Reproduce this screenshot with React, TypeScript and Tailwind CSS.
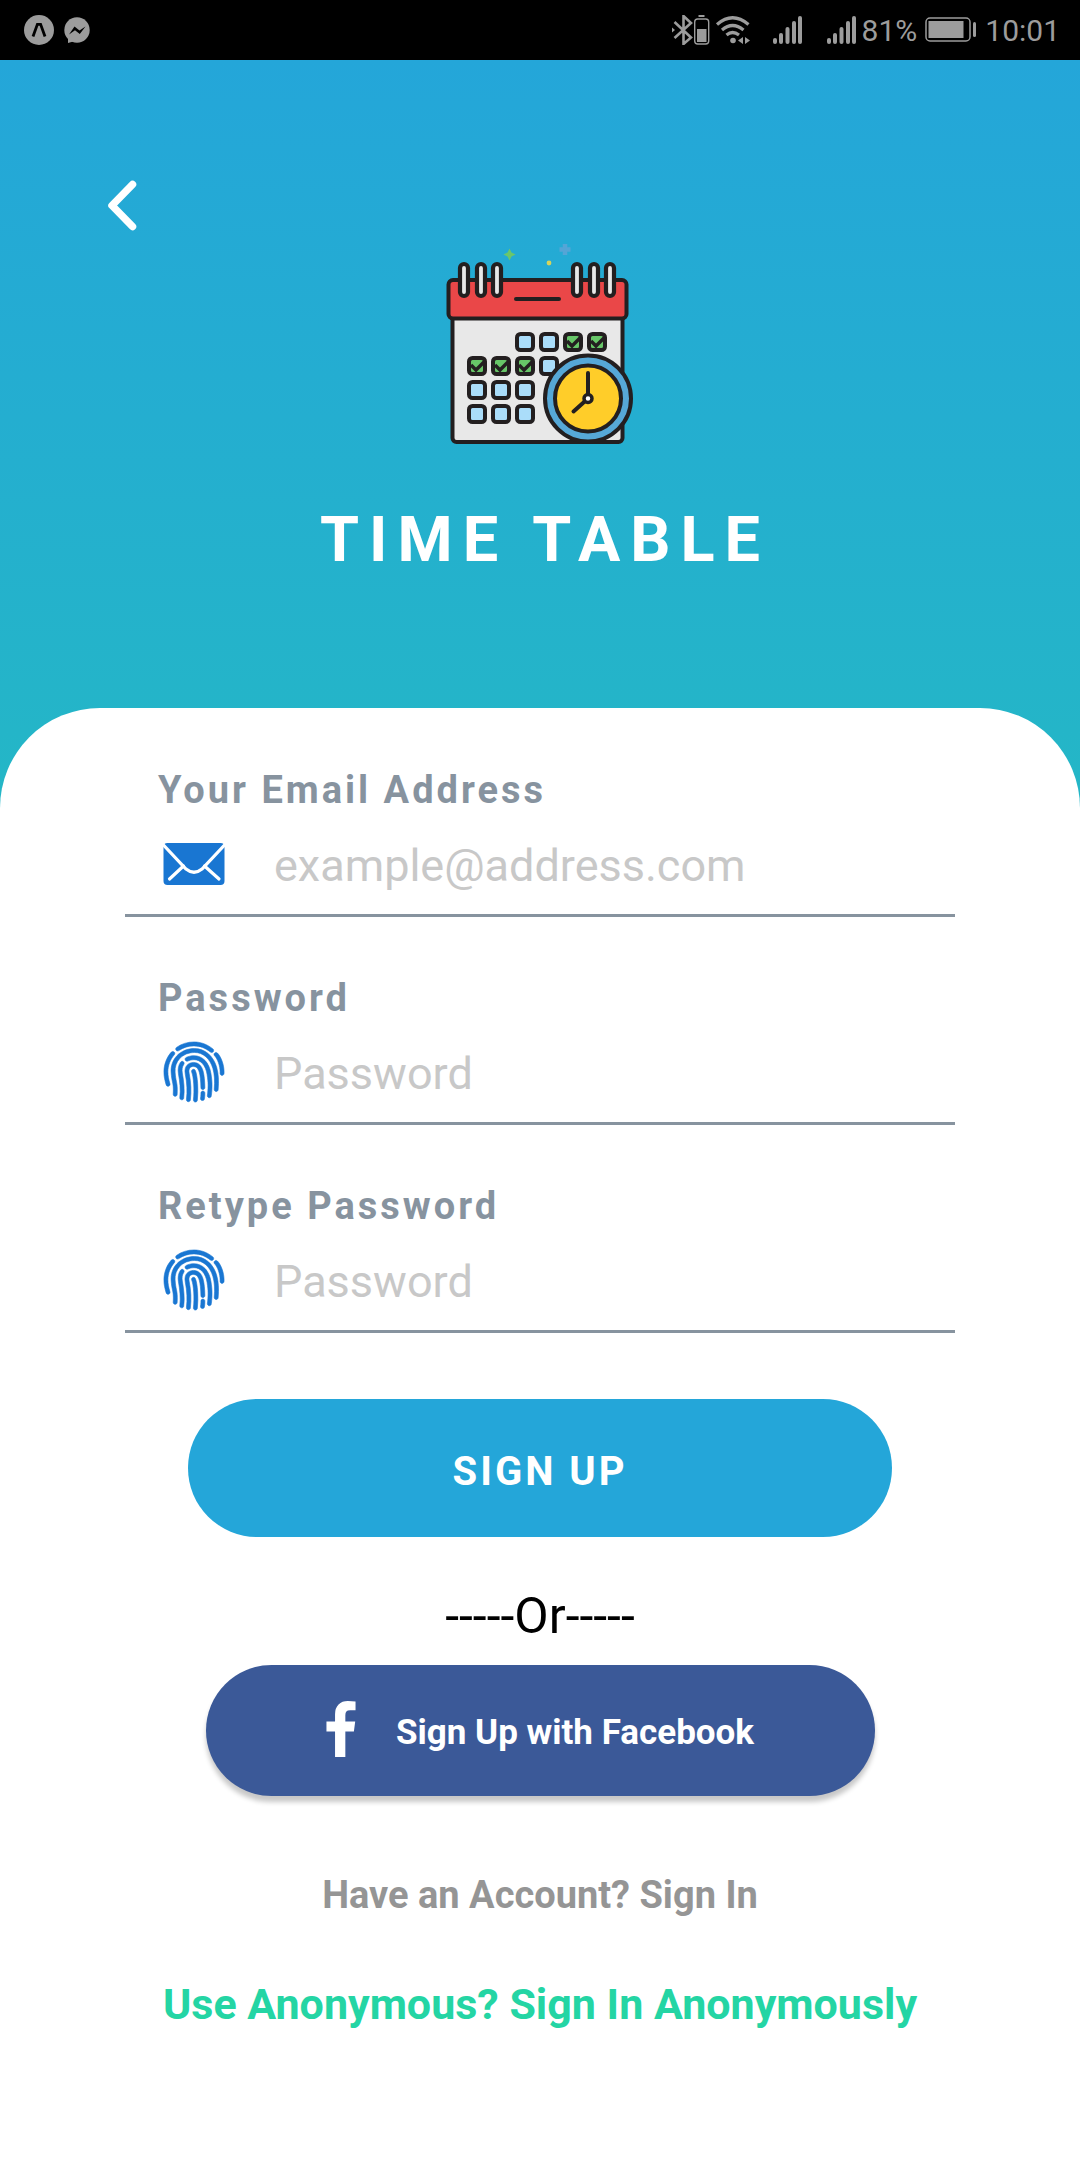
import { useId } from "react";
import { IoIosFingerPrint } from "react-icons/io";

function StatusBar() {
  return (
    <div className="flex h-[60px] items-center justify-between bg-black pr-[20px] pl-[24px] text-[#9c9c9c]">
      <div className="flex items-center gap-[10px]">
        <svg width="30" height="30" viewBox="0 0 30 30">
          <circle cx="15" cy="15" r="15" fill="#9c9c9c" />
          <path d="M9 21.500 13.400 9.300h3.200L21 21.500" fill="none" stroke="#000" strokeWidth="2.800" />
        </svg>
        <svg width="26" height="27" viewBox="0 0 26 27">
          <circle cx="13" cy="13" r="12.700" fill="#9c9c9c" />
          <path d="M4 20v6l7-2z" fill="#9c9c9c" />
          <path d="M5 17.500 10.500 9.500 15.500 13.500 21.500 9.500 15.800 17 11 13.300z" fill="#000" />
        </svg>
      </div>
      <div className="flex items-center">
        <svg width="218" height="30" viewBox="0 0 218 30" fill="#9c9c9c">
          <path d="M3.500 7 20 22.500 12.500 29V1l7.500 7L3.500 23" fill="none" stroke="#9c9c9c" strokeWidth="2.600" transform="translate(-1 0)" />
          <path d="M0 12.500l3 2.500-3 2.500z" />
          <rect x="26.500" y="0" width="6" height="2" />
          <rect x="22.700" y="4" width="14" height="25" rx="3" fill="none" stroke="#9c9c9c" strokeWidth="1.400" />
          <rect x="25" y="14" width="9.500" height="13" />
          <g fill="none" stroke="#9c9c9c" strokeWidth="3.200">
            <path d="M45 9.500q15.500-13.500 31.500 0" />
            <path d="M50 15q10.500-9 21.500 0" />
            <path d="M54.500 20q6-5 12.500 0" />
          </g>
          <circle cx="61" cy="25.500" r="2.800" />
          <path d="M71 22v7l-5-3.500zM73 22v7l5-3.500z" />
          <g transform="translate(101 0)">
            <rect x="0" y="23" width="4" height="6" rx="2" />
            <rect x="6" y="18" width="4" height="11" rx="2" />
            <rect x="12.500" y="12" width="4" height="17" rx="2" />
            <rect x="19" y="6" width="4" height="23" rx="2" />
            <rect x="25" y="1" width="4" height="28" rx="2" />
          </g>
          <g transform="translate(155 0)">
            <rect x="0" y="23" width="4" height="6" rx="2" />
            <rect x="6" y="18" width="4" height="11" rx="2" />
            <rect x="12.500" y="12" width="4" height="17" rx="2" />
            <rect x="19" y="6" width="4" height="23" rx="2" />
            <rect x="25" y="1" width="4" height="28" rx="2" />
          </g>
        </svg>
        <span className="-ml-[28px] text-[30px]">81%</span>
        <svg className="mx-[8px]" width="52" height="26" viewBox="0 0 52 26">
          <rect x="1" y="1" width="44" height="23" rx="4" fill="none" stroke="#9c9c9c" strokeWidth="1.500" />
          <rect x="3.500" y="4" width="35" height="17" fill="#9c9c9c" />
          <rect x="48" y="5" width="3" height="15" rx="1.500" fill="#9c9c9c" />
        </svg>
        <span className="text-[30px]">10:01</span>
      </div>
    </div>
  );
}

const EMPTY_DAYS = [
  [95, 112], [119, 112], [119, 136],
  [47, 160], [71, 160], [95, 160],
  [47, 184], [71, 184], [95, 184],
];
const CHECKED_DAYS = [[143, 112], [167, 112], [47, 136], [71, 136], [95, 136]];
const RINGS = [34, 51, 67, 147, 164, 180];

function CalendarLogo() {
  return (
    <svg width="220" height="230" viewBox="0 0 220 230" aria-hidden="true">
      <path d="M79.500 18.500 81.500 22.500 85.500 24.500 81.500 26.500 79.500 30.500 77.500 26.500 73.500 24.500 77.500 22.500z" fill="#6bc66b" />
      <path d="M135 14v11M129.500 19.500h11" stroke="#54a5d6" strokeWidth="4.500" />
      <circle cx="119" cy="33" r="2.400" fill="#d7d45a" />
      <rect x="22.500" y="80" width="170" height="132" rx="4" fill="#e8e8e8" stroke="#231f20" strokeWidth="4" />
      <rect x="18.500" y="50" width="178" height="38.500" rx="4.500" fill="#ea4748" stroke="#231f20" strokeWidth="4" />
      <path d="M86 69h43" stroke="#231f20" strokeWidth="4" strokeLinecap="round" />
      {RINGS.map((x) => (
        <rect key={x} x={x - 4} y="34" width="8" height="32" rx="4" fill="#e8e8e8" stroke="#231f20" strokeWidth="4.200" />
      ))}
      {EMPTY_DAYS.map(([x, y]) => (
        <rect key={`${x}-${y}`} x={x - 8} y={y - 8} width="16" height="16" rx="3.500" fill="#aaddfa" stroke="#231f20" strokeWidth="4" />
      ))}
      {CHECKED_DAYS.map(([x, y]) => (
        <g key={`${x}-${y}`} stroke="#231f20">
          <rect x={x - 8} y={y - 8} width="16" height="16" rx="3.500" fill="#67c668" strokeWidth="4" />
          <path d={`M${x - 6} ${y - 1}l5 5 8-8`} fill="none" strokeWidth="3.500" />
        </g>
      ))}
      <circle cx="158" cy="168.500" r="43" fill="#56a8d7" stroke="#231f20" strokeWidth="4" />
      <circle cx="158" cy="168.500" r="33" fill="#ffcd29" stroke="#231f20" strokeWidth="4" />
      <path d="M158 168.500V143M158 168.500 143.500 181.500" stroke="#231f20" strokeWidth="4" strokeLinecap="round" />
      <circle cx="158" cy="168.500" r="4" fill="#fff" stroke="#231f20" strokeWidth="3.500" />
    </svg>
  );
}

function MailIcon() {
  return (
    <svg width="64" height="44" viewBox="0 0 64 44" aria-hidden="true">
      <rect x="1.500" y="1" width="61" height="42" rx="4" fill="#1976d2" />
      <g fill="none" stroke="#fff" strokeWidth="3.200">
        <path d="M1 2.500 24 27q8 6.500 16 0L63 2.500" />
        <path d="M21.500 24 7.500 37M42.500 24 57 37" strokeLinecap="round" />
      </g>
    </svg>
  );
}

type FieldProps = { label: string; placeholder: string; type: string; icon: "mail" | "finger" };

function Field({ label, placeholder, type, icon }: FieldProps) {
  const id = useId();
  return (
    <div className="border-b-3 border-[#87939f]">
      <label htmlFor={id} className="block pl-[33px] text-[38px] leading-[48px] font-bold tracking-[3px] text-[#87939f]">
        {label}
      </label>
      <div className="flex h-[100px] items-center pl-[37px]">
        <div className="flex w-[64px] shrink-0 justify-center">
          {icon === "mail" ? (
            <MailIcon />
          ) : (
            <IoIosFingerPrint size={74} color="#1976d2" stroke="#1976d2" strokeWidth={4} className="shrink-0" />
          )}
        </div>
        <input
          id={id}
          type={type}
          placeholder={placeholder}
          className="ml-[48px] h-full min-w-0 flex-1 bg-transparent pt-[2px] text-[45px] outline-none placeholder:text-[#c8c8c8]"
        />
      </div>
    </div>
  );
}

export default function App() {
  return (
    <div className="flex min-h-screen flex-col bg-white font-[Roboto,sans-serif]">
      <StatusBar />
      <div className="flex flex-1 flex-col bg-linear-to-b/srgb from-[#24a6d9] to-[#24d5a4]">
        <header className="relative flex h-[648px] flex-col items-center pt-[170px]">
          <button type="button" aria-label="Back" className="absolute top-[116px] left-[104px]">
            <svg width="36" height="60" viewBox="0 0 36 60">
              <path d="M28.500 8.500 8 29.500 28.500 50.500" fill="none" stroke="#fff" strokeWidth="7.500" strokeLinecap="round" strokeLinejoin="round" />
            </svg>
          </button>
          <CalendarLogo />
          <h1 className="mt-[40px] pl-[10px] text-[63px] leading-[80px] font-bold tracking-[10px] text-white">TIME TABLE</h1>
        </header>
        <main className="flex flex-1 flex-col items-center rounded-t-[100px] bg-white px-[125px] pt-[58px]">
          <form className="flex w-full flex-col" onSubmit={(e) => e.preventDefault()}>
            <div className="flex flex-col gap-[57px]">
              <Field label="Your Email Address" placeholder="example@address.com" type="email" icon="mail" />
              <Field label="Password" placeholder="Password" type="password" icon="finger" />
              <Field label="Retype Password" placeholder="Password" type="password" icon="finger" />
            </div>
            <button type="submit" className="mx-[63px] mt-[66px] h-[138px] rounded-[70px] bg-[#24a6d9] pt-[8px] text-[40px] font-bold tracking-[3px] text-white">
              SIGN UP
            </button>
          </form>
          <p className="mt-[49px] text-[50px] leading-[60px] text-black">-----Or-----</p>
          <button type="button" className="mt-[19px] flex h-[131px] w-full max-w-[669px] items-center justify-center gap-[40px] rounded-[66px] bg-[#3b5998] text-[35px] font-bold text-white shadow-[0_6px_5px_rgba(0,0,0,0.22)]">
            <svg className="mb-[4px]" width="30" height="56" viewBox="95 -1536 864 1664" aria-hidden="true">
              <path transform="scale(1 -1)" fill="#fff" d="M959 1524v-264h-157q-86 0 -116 -36t-30 -108v-189h293l-39 -296h-254v-759h-306v759h-255v296h255v218q0 186 104 288.500t277 102.500q147 0 228 -12z" />
            </svg>
            <span className="pt-[5px]">Sign Up with Facebook</span>
          </button>
          <a href="#signin" className="mt-[75px] text-[38px] leading-[48px] font-bold text-[#959595]">Have an Account? Sign In</a>
          <a href="#anonymous" className="mt-[59px] text-[43px] leading-[52px] font-bold text-[#24d5a4]">Use Anonymous? Sign In Anonymously</a>
        </main>
      </div>
    </div>
  );
}
